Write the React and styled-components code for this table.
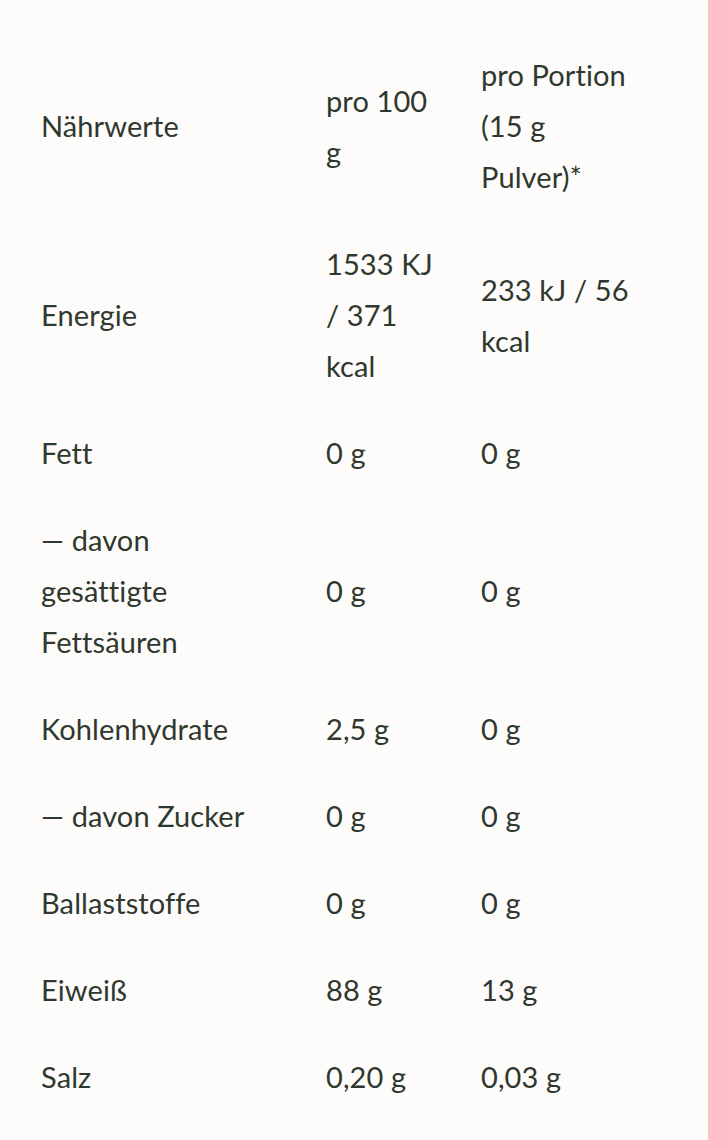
import styled, { createGlobalStyle } from "styled-components";

const rows = [
  { name: "Nährwerte", per100: "pro 100 g", portion: "pro Portion (15 g Pulver)*" },
  { name: "Energie", per100: "1533 KJ / 371 kcal", portion: "233 kJ / 56 kcal" },
  { name: "Fett", per100: "0 g", portion: "0 g" },
  { name: "— davon gesättigte Fettsäuren", per100: "0 g", portion: "0 g" },
  { name: "Kohlenhydrate", per100: "2,5 g", portion: "0 g" },
  { name: "— davon Zucker", per100: "0 g", portion: "0 g" },
  { name: "Ballaststoffe", per100: "0 g", portion: "0 g" },
  { name: "Eiweiß", per100: "88 g", portion: "13 g" },
  { name: "Salz", per100: "0,20 g", portion: "0,03 g" },
];

export default function App() {
  return (
    <>
      <GlobalStyle />
      <Page>
        <NutritionTable>
          {rows.map((row, i) => (
            <Row key={i}>
              <Cell gap={60}>{row.name}</Cell>
              <Cell gap={43}>{row.per100}</Cell>
              <Cell gap={26}>{row.portion}</Cell>
            </Row>
          ))}
        </NutritionTable>
      </Page>
    </>
  );
}

const GlobalStyle = createGlobalStyle`
  body {
    margin: 0;
    background: #fdfcfb;
  }
`;

const Page = styled.div`
  padding: 31px 41px 17px 41px;
  background: #fdfcfb;
  font-family: "Lato", "Liberation Sans", sans-serif;
  color: #2f382e;
`;

const NutritionTable = styled.div`
  display: flex;
  flex-direction: column;
  width: 626px;
`;

const Row = styled.div`
  display: grid;
  grid-template-columns: 285px 155px 186px;
  align-items: center;
  padding: 18px 0;
`;

const Cell = styled.div`
  padding-right: ${(props) => props.gap}px;
  font-size: 29px;
  font-weight: 400;
  line-height: 51px;
  letter-spacing: 0.1px;
`;
